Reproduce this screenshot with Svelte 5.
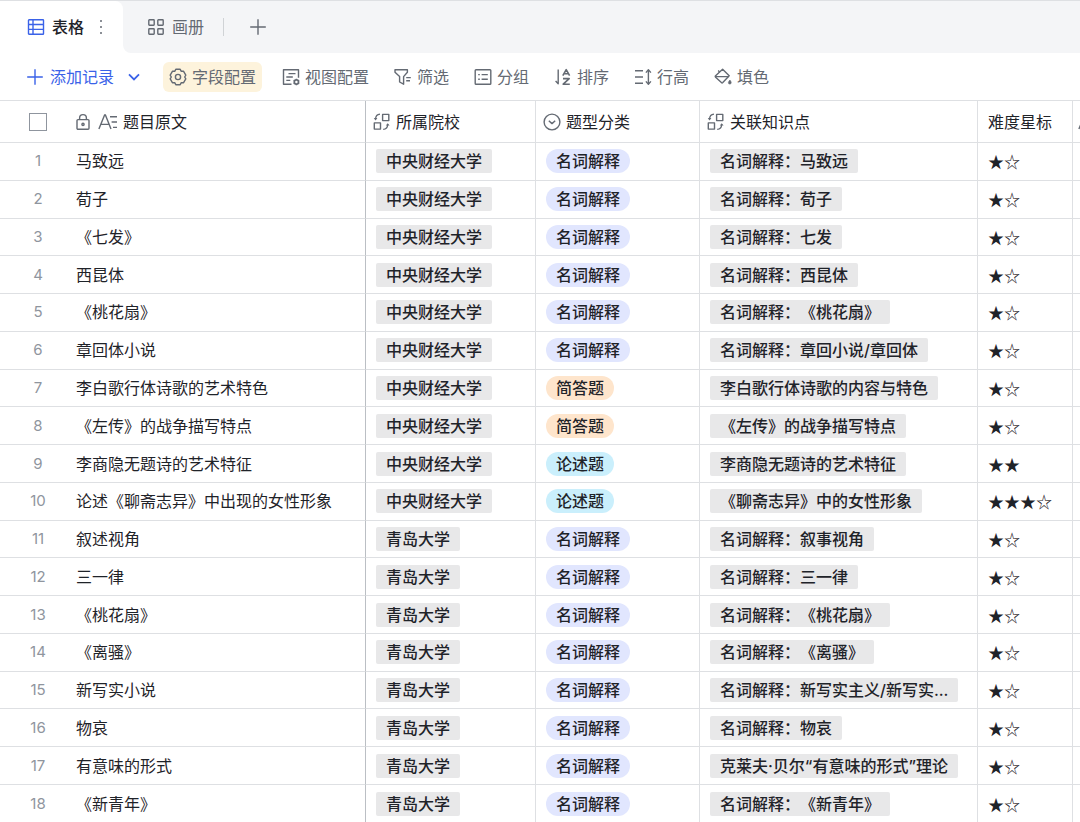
<script lang="ts">
  type Kind = 'term' | 'short' | 'essay';

  interface Row {
    title: string;
    school: string;
    kind: Kind;
    topic: string;
    stars: string;
  }

  const kinds: Record<Kind, string> = {
    term: '名词解释',
    short: '简答题',
    essay: '论述题',
  };

  const cufe = '中央财经大学';
  const qdu = '青岛大学';

  const rows: Row[] = [
    { title: '马致远', school: cufe, kind: 'term', topic: '名词解释：马致远', stars: '★☆' },
    { title: '荀子', school: cufe, kind: 'term', topic: '名词解释：荀子', stars: '★☆' },
    { title: '《七发》', school: cufe, kind: 'term', topic: '名词解释：七发', stars: '★☆' },
    { title: '西昆体', school: cufe, kind: 'term', topic: '名词解释：西昆体', stars: '★☆' },
    { title: '《桃花扇》', school: cufe, kind: 'term', topic: '名词解释：《桃花扇》', stars: '★☆' },
    { title: '章回体小说', school: cufe, kind: 'term', topic: '名词解释：章回小说/章回体', stars: '★☆' },
    { title: '李白歌行体诗歌的艺术特色', school: cufe, kind: 'short', topic: '李白歌行体诗歌的内容与特色', stars: '★☆' },
    { title: '《左传》的战争描写特点', school: cufe, kind: 'short', topic: '《左传》的战争描写特点', stars: '★☆' },
    { title: '李商隐无题诗的艺术特征', school: cufe, kind: 'essay', topic: '李商隐无题诗的艺术特征', stars: '★★' },
    { title: '论述《聊斋志异》中出现的女性形象', school: cufe, kind: 'essay', topic: '《聊斋志异》中的女性形象', stars: '★★★☆' },
    { title: '叙述视角', school: qdu, kind: 'term', topic: '名词解释：叙事视角', stars: '★☆' },
    { title: '三一律', school: qdu, kind: 'term', topic: '名词解释：三一律', stars: '★☆' },
    { title: '《桃花扇》', school: qdu, kind: 'term', topic: '名词解释：《桃花扇》', stars: '★☆' },
    { title: '《离骚》', school: qdu, kind: 'term', topic: '名词解释：《离骚》', stars: '★☆' },
    { title: '新写实小说', school: qdu, kind: 'term', topic: '名词解释：新写实主义/新写实...', stars: '★☆' },
    { title: '物哀', school: qdu, kind: 'term', topic: '名词解释：物哀', stars: '★☆' },
    { title: '有意味的形式', school: qdu, kind: 'term', topic: '克莱夫·贝尔“有意味的形式”理论', stars: '★☆' },
    { title: '《新青年》', school: qdu, kind: 'term', topic: '名词解释：《新青年》', stars: '★☆' },
  ];

  const tools = [
    { icon: 'view', label: '视图配置' },
    { icon: 'filter', label: '筛选' },
    { icon: 'group', label: '分组' },
    { icon: 'sort', label: '排序' },
    { icon: 'height', label: '行高' },
    { icon: 'fill', label: '填色' },
  ];

  let allChecked = $state(false);
</script>

{#snippet icon(name: string)}
  <svg
    class="icon"
    viewBox="0 0 18 18"
    fill="none"
    stroke="currentColor"
    stroke-width="1.4"
    stroke-linejoin="round"
    aria-hidden="true"
  >
    {#if name === 'table'}
      <rect x="1.5" y="1.7" width="15" height="14.6" rx="0.6" />
      <path d="M6 1.7v14.6M1.5 6.5h15M1.5 11.4h15" />
    {:else if name === 'gallery'}
      <rect x="1.8" y="1.8" width="5.4" height="5.4" rx="0.6" />
      <rect x="10.8" y="1.8" width="5.4" height="5.4" rx="0.6" />
      <rect x="1.8" y="10.8" width="5.4" height="5.4" rx="0.6" />
      <rect x="10.8" y="10.8" width="5.4" height="5.4" rx="0.6" />
    {:else if name === 'plus'}
      <path d="M9 1.2v15.6M1.2 9h15.6" />
    {:else if name === 'gear'}
      <path d="M6.8 1.3h4.4l1.1 2h2.3l2.2 3.8L15.7 9l1.1 1.9-2.2 3.8h-2.3l-1.1 2H6.8l-1.1-2H3.4l-2.2-3.8L2.3 9 1.2 7.1l2.2-3.8h2.3z" />
      <circle cx="9" cy="9" r="2.6" />
    {:else if name === 'view'}
      <path d="M9.5 16.3H1.5V1.7h15v8" />
      <path d="M6.5 5.6h7M4.3 9h6.5M4.3 12.4h4" />
      <circle cx="14.4" cy="14" r="2.1" stroke-width="1.7" />
      <path d="M14.4 10.8v1M14.4 16.2v1M11.6 12.4l.9.5M16.3 15.1l.9.5M11.6 15.6l.9-.5M16.3 12.9l.9-.5" />
    {:else if name === 'filter'}
      <path d="M1 1.8h12.4v2.4L9.6 8.6v7.6l-4-2.2V8.6L1 4.2z" />
      <path d="M12.2 9.6h4.6M12.2 12.8h3.8" />
    {:else if name === 'group'}
      <rect x="1.2" y="1.8" width="15.6" height="14.4" rx="0.8" />
      <path d="M4.2 6.6h1.6M7.6 6.6h6.2M4.2 11.2h1.6M7.6 11.2h6.2" />
    {:else if name === 'sort'}
      <path d="M4.2 1.5v14.2L1.6 13" />
      <path d="M8.8 7.6l3.4-6 3.4 6M10 5.8h4.4M9 10.6h6.2l-6 5.6h6.6" stroke-width="1.6" />
    {:else if name === 'height'}
      <path d="M1 2.8h8M1 9h8M1 15.2h8M14.4 2.4v13.2" />
      <path d="M11.9 4.6l2.5-2.8 2.5 2.8M11.9 13.4l2.5 2.8 2.5-2.8" />
    {:else if name === 'fill'}
      <path d="M8.6 1.2l6.6 6.6-6.4 6.8a1 1 0 0 1-1.4 0L1.6 9.2a1 1 0 0 1 0-1.4z" />
      <path d="M5.6 3.9l-1.4-1.4M1.4 8.6h13.6" />
      <path d="M15.9 12c.9 1.2 1.3 1.9 1.3 2.7a1.4 1.4 0 0 1-2.8 0c0-.8.6-1.5 1.5-2.7z" fill="currentColor" stroke-width="0.6" />
    {:else if name === 'lock'}
      <rect x="3" y="6.6" width="12" height="9.6" rx="1" />
      <path d="M5.6 6.6V5a3.4 3.4 0 0 1 6.8 0v1.6" />
      <circle cx="9" cy="11.4" r="1.1" />
    {:else if name === 'link'}
      <rect x="9.6" y="1.4" width="6.2" height="6.2" />
      <rect x="1.3" y="9.9" width="6.2" height="6.2" />
      <path d="M7 1.2C4 1.4 2.6 3 2.5 6.4M10.2 16.4c3-.2 4.4-1.8 4.5-5.2" stroke-width="1.3" />
      <path d="M.8 5h3.6L2.5 7.4zM12.8 12.6h3.8l-1.9-2.4z" fill="currentColor" stroke="none" />
    {:else if name === 'select'}
      <circle cx="9" cy="9" r="7.9" />
      <path d="M5.8 7.8L9 10.6l3.2-2.8" />
    {/if}
  </svg>
{/snippet}

{#snippet textIcon()}
  <svg class="icon-text" viewBox="0 0 20 18" fill="none" stroke="currentColor" stroke-width="1.4" aria-hidden="true">
    <path d="M.9 16L6.6 2h.8L13 16M2.8 11.4h8.4" />
    <path d="M12 3.8h7M13.6 9H19M15 14.4h4" />
  </svg>
{/snippet}

<div class="app">
  <nav class="tabs" aria-label="视图">
    <div class="tabs__current">
      <button type="button" class="tab is-active">
        {@render icon('table')}
        <span>表格</span>
        <svg class="dots" viewBox="0 0 4 16" fill="currentColor" aria-hidden="true">
          <circle cx="2" cy="2" r="1" />
          <circle cx="2" cy="8" r="1" />
          <circle cx="2" cy="14" r="1" />
        </svg>
      </button>
    </div>
    <div class="tabs__rest">
      <button type="button" class="tab">
        {@render icon('gallery')}
        <span>画册</span>
      </button>
      <span class="tabs__divider"></span>
      <button type="button" class="tab" aria-label="+">
        {@render icon('plus')}
      </button>
    </div>
  </nav>

  <div class="toolbar">
    <button type="button" class="tool tool--add">
      {@render icon('plus')}
      <span>添加记录</span>
      <svg class="chevron" viewBox="0 0 12 8" fill="none" stroke="currentColor" stroke-width="1.8" aria-hidden="true">
        <path d="M1 1.4l5 5 5-5" />
      </svg>
    </button>
    <button type="button" class="tool tool--marked">
      {@render icon('gear')}
      <span>字段配置</span>
    </button>
    <div class="toolbar__list">
      {#each tools as tool}
        <button type="button" class="tool">
          {@render icon(tool.icon)}
          <span>{tool.label}</span>
        </button>
      {/each}
    </div>
  </div>

  <div class="grid">
    <table>
      <colgroup>
        <col class="col-index" />
        <col class="col-title" />
        <col class="col-school" />
        <col class="col-kind" />
        <col class="col-topic" />
        <col class="col-stars" />
        <col class="col-more" />
      </colgroup>
      <thead>
        <tr>
          <th class="index">
            <input type="checkbox" aria-label="全选" bind:checked={allChecked} />
          </th>
          <th class="title">
            <div class="head">
              <span class="head__lock">{@render icon('lock')}</span>
              {@render textIcon()}
              <span>题目原文</span>
            </div>
          </th>
          <th><div class="head">{@render icon('link')}<span>所属院校</span></div></th>
          <th><div class="head">{@render icon('select')}<span>题型分类</span></div></th>
          <th><div class="head">{@render icon('link')}<span>关联知识点</span></div></th>
          <th class="plain">难度星标</th>
          <th class="more">{@render textIcon()}</th>
        </tr>
      </thead>
      <tbody>
        {#each rows as row, index}
          <tr>
            <td class="index">{index + 1}</td>
            <td class="title">{row.title}</td>
            <td><span class="tag">{row.school}</span></td>
            <td><span class="tag tag--{row.kind}">{kinds[row.kind]}</span></td>
            <td><span class="tag">{row.topic}</span></td>
            <td class="stars">{row.stars}</td>
            <td></td>
          </tr>
        {/each}
      </tbody>
    </table>
  </div>
</div>

<style>
  :global(body) {
    margin: 0;
    background: #fff;
  }

  .app {
    display: flex;
    flex-direction: column;
    height: 100vh;
    overflow: hidden;
    font-family: Inter, 'Noto Sans CJK SC', sans-serif;
    font-size: 16px;
    line-height: 24px;
    color: #1f2329;
    text-spacing-trim: space-all;
  }

  button {
    display: flex;
    align-items: center;
    padding: 0;
    border: none;
    background: none;
    font: inherit;
    color: inherit;
    white-space: nowrap;
    cursor: pointer;
  }

  .icon {
    flex: none;
    width: 18px;
    height: 18px;
  }

  .icon-text {
    flex: none;
    width: 20px;
    height: 18px;
  }

  /* ---- Tabs ---- */
  .tabs {
    display: flex;
    flex: none;
    height: 52px;
    border-top: 1px solid #dee0e3;
  }

  .tabs__current {
    display: flex;
    background: #f4f5f7;
  }

  .tabs__rest {
    display: flex;
    flex: 1;
    align-items: center;
    gap: 19px;
    padding-left: 24px;
    border-bottom-left-radius: 8px;
    background: #f4f5f7;
  }

  .tab {
    gap: 7px;
    color: #646a73;
  }

  .tab.is-active {
    padding: 0 20px 0 27px;
    border-top-right-radius: 8px;
    background: #fff;
    color: #1f2329;
    font-weight: 500;
  }

  .tab.is-active .icon {
    color: #3a62e8;
  }

  .tabs__divider {
    width: 1px;
    height: 18px;
    margin-right: 6px;
    background: #d0d3d6;
  }

  .dots {
    width: 4px;
    height: 16px;
    margin-left: 8px;
    color: #646a73;
  }

  /* ---- Toolbar ---- */
  .toolbar {
    display: flex;
    flex: none;
    align-items: center;
    height: 47px;
    padding-left: 26px;
    border-bottom: 1px solid #dee0e3;
  }

  .toolbar__list {
    display: flex;
    gap: 25px;
    margin-left: 20px;
  }

  .tool {
    gap: 5px;
    color: #646a73;
  }

  .tool--add {
    gap: 6px;
    color: #3a62e8;
  }

  .chevron {
    width: 12px;
    height: 8px;
    margin-left: 8px;
  }

  .tool--marked {
    height: 30px;
    margin-left: 23px;
    padding: 0 6px;
    border-radius: 6px;
    background: #fdf3dc;
  }

  /* ---- Table ---- */
  .grid {
    flex: 1;
    min-height: 0;
    overflow: auto;
    scrollbar-width: none;
  }

  table {
    width: 100%;
    min-width: 1180px;
    /* keeps the last row's border under the fold */
    height: calc(100% + 1px);
    border-spacing: 0;
    table-layout: fixed;
  }

  .col-index { width: 76px; }
  .col-title { width: 290px; }
  .col-school { width: 170px; }
  .col-kind { width: 164px; }
  .col-topic { width: 278px; }
  .col-stars { width: 95px; }

  th,
  td {
    box-sizing: border-box;
    padding: 0 0 0 10px;
    border-right: 1px solid #dee0e3;
    border-bottom: 1px solid #dee0e3;
    font-weight: 400;
    text-align: left;
    white-space: nowrap;
  }

  th {
    height: 42px;
    padding-left: 7px;
  }

  th.plain {
    padding-left: 10px;
  }

  th.more {
    padding-left: 5px;
    color: #646a73;
  }

  th.index,
  td.index {
    padding: 0;
    border-right: none;
    text-align: center;
  }

  td.index {
    font-size: 15px;
    color: #8f959e;
  }

  th.title,
  td.title {
    padding-left: 0;
    border-right-color: #bbbfc4;
  }

  .head {
    display: flex;
    align-items: center;
    gap: 5px;
  }

  .head svg {
    color: #646a73;
  }

  .head__lock {
    display: flex;
    margin: 0 1px 0 -2px;
  }

  .more svg {
    display: block;
  }

  input[type='checkbox'] {
    display: block;
    box-sizing: border-box;
    width: 18px;
    height: 18px;
    margin: 0 auto;
    border: 1px solid #8f959e;
    appearance: none;
  }

  input[type='checkbox']:checked {
    border-color: #3a62e8;
    background: #3a62e8;
  }

  .stars {
    font-family: 'Noto Sans CJK SC', sans-serif;
  }

  .tag {
    display: block;
    width: fit-content;
    padding: 0 10px;
    border-radius: 2px;
    background: #e8e8e9;
    font-weight: 500;
  }

  .tag--term,
  .tag--short,
  .tag--essay {
    border-radius: 12px;
  }

  .tag--term { background: #e1e6fe; }
  .tag--short { background: #fee5cc; }
  .tag--essay { background: #caeffc; }
</style>
